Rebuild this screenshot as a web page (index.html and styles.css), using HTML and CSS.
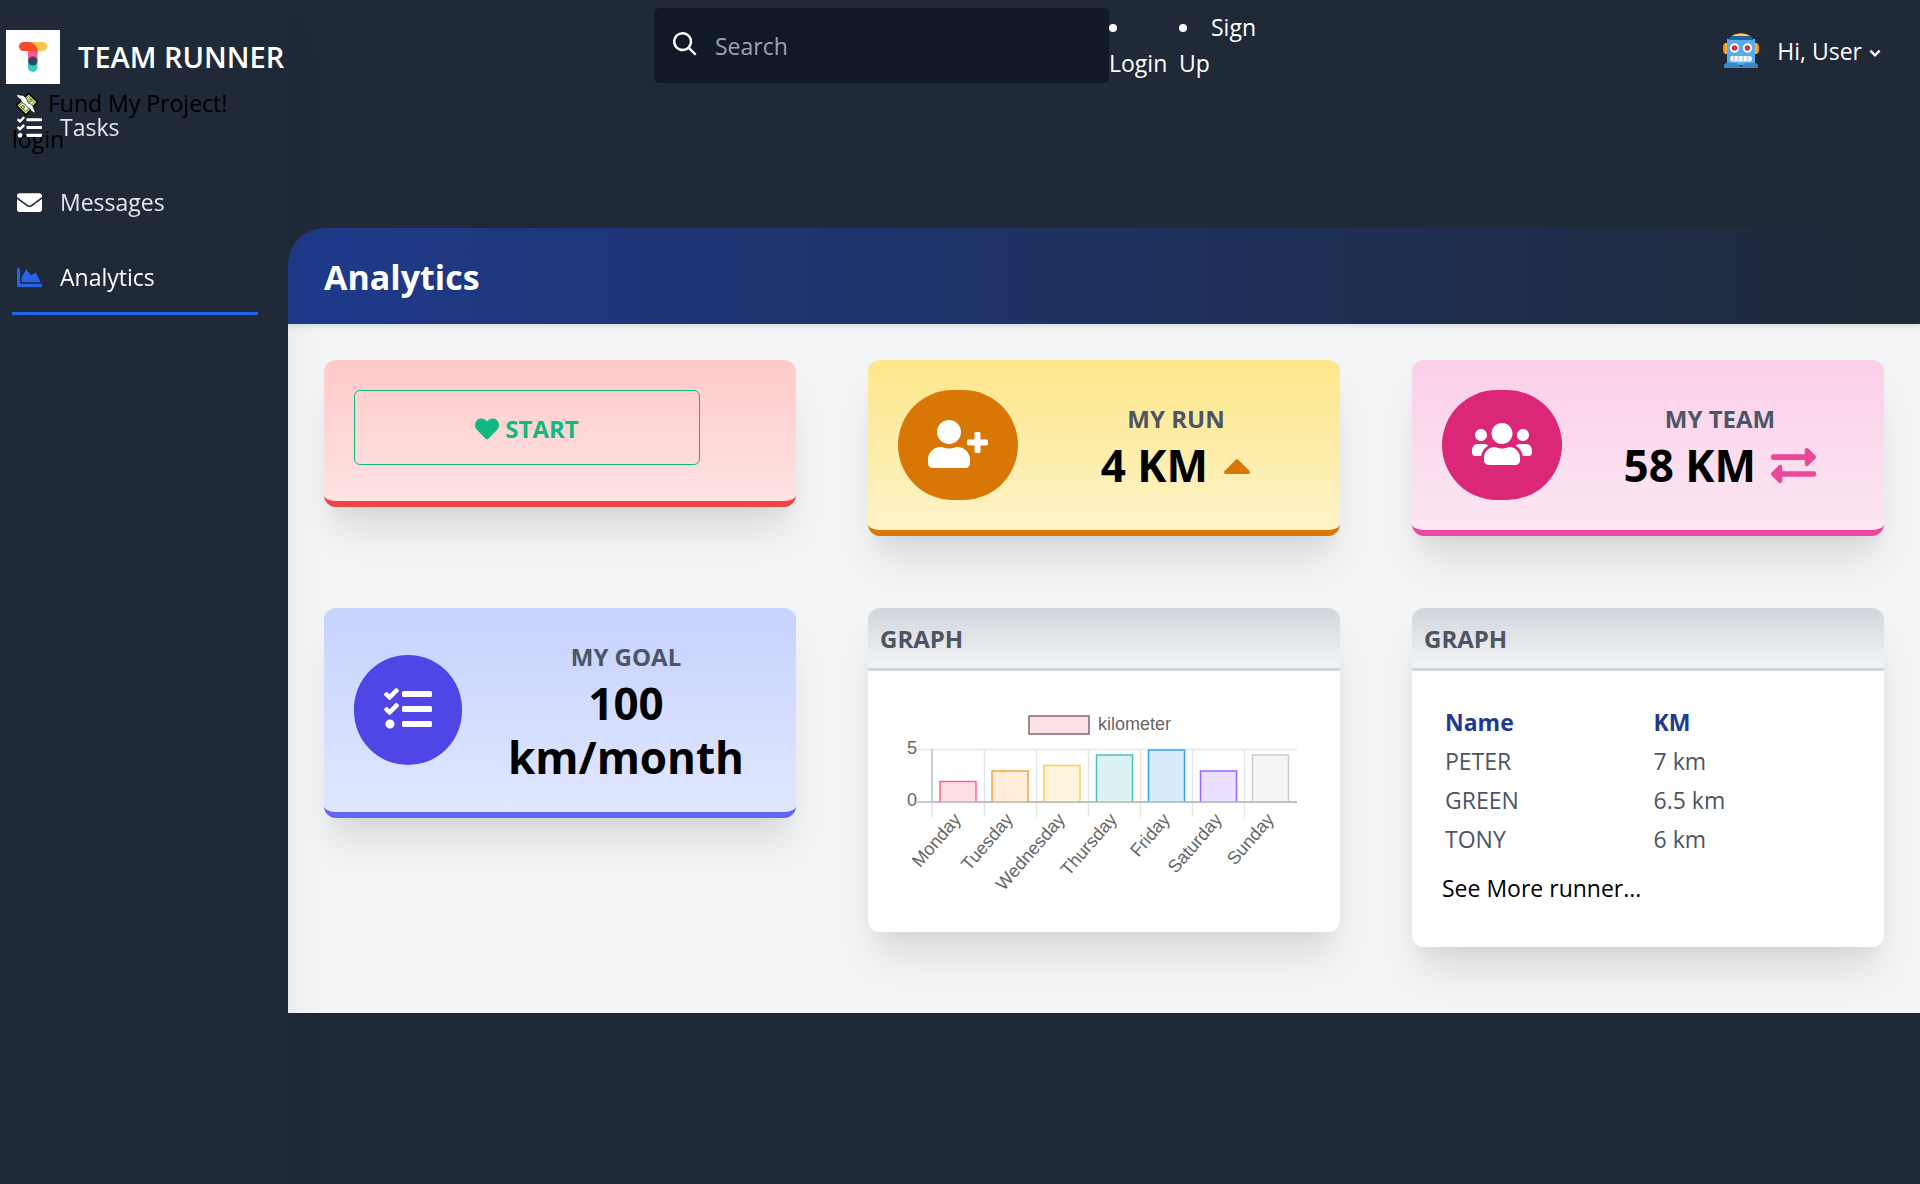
FILE: index.html
```html
<!DOCTYPE html>
<html lang="en">
<head>
<meta charset="utf-8">
<meta name="viewport" content="width=device-width, initial-scale=1">
<title>Team Runner</title>
<link rel="stylesheet" href="styles.css">
</head>
<body>
<svg class="sprite" aria-hidden="true">
  <symbol id="tasks" viewBox="0 0 512 512"><path d="M139.61 35.5a12 12 0 0 0-17 0L58.93 98.81l-22.7-22.12a12 12 0 0 0-17 0L3.53 92.41a12 12 0 0 0 0 17l47.59 47.4a12.78 12.78 0 0 0 17.61 0l15.59-15.62L156.52 69a12.09 12.09 0 0 0 .09-17zm0 159.19a12 12 0 0 0-17 0l-63.68 63.72-22.7-22.1a12 12 0 0 0-17 0L3.53 252a12 12 0 0 0 0 17L51 316.5a12.77 12.77 0 0 0 17.6 0l15.7-15.69 72.2-72.22a12 12 0 0 0 .09-16.9zM64 368c-26.49 0-48.59 21.5-48.59 48S37.53 464 64 464a48 48 0 0 0 0-96zm432 16H208a16 16 0 0 0-16 16v32a16 16 0 0 0 16 16h288a16 16 0 0 0 16-16v-32a16 16 0 0 0-16-16zm0-320H208a16 16 0 0 0-16 16v32a16 16 0 0 0 16 16h288a16 16 0 0 0 16-16V80a16 16 0 0 0-16-16zm0 160H208a16 16 0 0 0-16 16v32a16 16 0 0 0 16 16h288a16 16 0 0 0 16-16v-32a16 16 0 0 0-16-16z"/></symbol>
</svg>

<header class="topbar">
  <div class="brand">
    <a class="brand-link" href="#">
      <svg class="logo" viewBox="0 0 54 54" aria-hidden="true">
        <rect width="54" height="54" fill="#fff"/>
        <rect x="20" y="12" width="21" height="9" rx="4.5" fill="#ffc24a"/>
        <path d="M22 18h9.500v14H22z" fill="#f8588f"/>
        <path d="M17.500 12h4.500c5.500 0 9.500 4 9.500 9v3c-1-2-3-3-5.500-3h-8.500a4.500 4.500 0 0 1 0-9z" fill="#fb4b2c"/>
        <path d="M22 31h9.500v6.200a4.700 4.700 0 0 1-9.500 0z" fill="#2dd0bd"/>
        <circle cx="26.800" cy="31" r="4.600" fill="#2e4763"/>
      </svg>
      <span>TEAM RUNNER</span>
    </a>
    <div class="extra">
      <a href="#"><svg class="money" viewBox="0 0 24 24" aria-hidden="true">
        <path d="M1.500 13.500 13.500 1.500l9 8.500-11.500 13z" fill="#c9f05c" stroke="#000" stroke-width="1.600" stroke-linejoin="round"/>
        <path d="M4.500 13.500 13.500 4.500l6 5.500-8.500 9.500z" fill="#e4f2b4" stroke="#6c7f3f"/>
        <circle cx="15" cy="8.500" r="1.500" fill="#c9f05c" stroke="#444" stroke-width=".8"/>
        <circle cx="8" cy="15" r="1.500" fill="#c9f05c" stroke="#444" stroke-width=".8"/>
        <path d="M1.500 2.500 8 3.500c2.500 1 4.500 4.500 5 7.500 3 .5 5 2.500 5.500 5l2 5c-3-.5-4.500-2-5.500-4.500-2-.5-4-2-4.500-4C7.500 11.500 6 9.500 5.500 7 3.500 6.500 2 5 1.500 2.500z" fill="#fff" stroke="#000" stroke-width=".6"/>
      </svg> Fund My Project!</a>
      <a href="#">login</a>
    </div>
  </div>

  <div class="middle">
    <label class="search">
      <svg viewBox="0 0 24 24" aria-label="Search"><path d="M12.900 14.320a8 8 0 1 1 1.410-1.410l5.350 5.330-1.420 1.420-5.330-5.340zM8 14A6 6 0 1 0 8 2a6 6 0 0 0 0 12z" transform="scale(1.200)"/></svg>
      <input type="search" placeholder="Search">
    </label>
    <ul class="account">
      <li class="login"><a href="#">Login</a></li>
      <li class="signup"><a href="#">Sign Up</a></li>
    </ul>
  </div>

  <div class="user">
    <button type="button" class="user-button">
      <svg class="robot" viewBox="0 0 36 36" aria-hidden="true">
        <ellipse cx="18" cy="5" rx="10" ry="4.500" fill="#f4900c"/>
        <path d="M9 3c5-3.500 13-3.500 18 0z" fill="#ffcc4d"/>
        <rect x="0" y="10" width="7" height="11" rx="4" fill="#f4900c"/>
        <rect x="29" y="10" width="7" height="11" rx="4" fill="#f4900c"/>
        <rect x="2" y="10" width="3" height="11" fill="#ffac33"/>
        <rect x="31" y="10" width="3" height="11" fill="#ffac33"/>
        <path d="M4 6h28v26H4z" fill="#55acee"/>
        <path d="M6 7c0-3 2-4 4-4h16c2 0 4 1 4 4z" fill="#226699"/>
        <path d="M1 33c0-2 1-3 3-3h10l4 4 4-4h10c2 0 3 1 3 3v2H1z" fill="#3b88c3"/>
        <circle cx="11.500" cy="15" r="4.700" fill="#fff"/><circle cx="24.500" cy="15" r="4.700" fill="#fff"/>
        <circle cx="11.500" cy="15" r="2.800" fill="#dd2e44"/><circle cx="24.500" cy="15" r="2.800" fill="#dd2e44"/>
        <rect x="7" y="23" width="22" height="5.500" rx="2.700" fill="#fff"/>
        <path d="M10 23h2v5.500h-2zm4.500 0h2v5.500h-2zm4.500 0h2v5.500h-2zm4.500 0h2v5.500h-2z" fill="#ccd6dd"/>
      </svg>
      <span>Hi, User</span>
      <svg class="chevron" viewBox="0 0 12 12" aria-hidden="true"><path d="M2 4l4 4 4-4" fill="none" stroke="#fff" stroke-width="2"/></svg>
    </button>
  </div>
</header>

<nav class="sidebar" aria-label="Main">
  <ul>
    <li><a href="#"><svg aria-hidden="true"><use href="#tasks"/></svg><span>Tasks</span></a></li>
    <li><a href="#"><svg viewBox="0 0 512 512" aria-hidden="true"><path d="M502.3 190.8c3.9-3.1 9.7-.2 9.7 4.700V400c0 26.500-21.500 48-48 48H48c-26.500 0-48-21.500-48-48V195.600c0-5 5.700-7.800 9.700-4.700 22.400 17.400 52.100 39.500 154.100 113.600 21.100 15.400 56.700 47.800 92.200 47.600 35.700.3 72-32.800 92.300-47.600 102-74.100 131.600-96.300 154-113.700zM256 320c23.200.4 56.600-29.200 73.400-41.400 132.700-96.300 142.800-104.700 173.400-128.700 5.800-4.500 9.200-11.500 9.200-18.900v-19c0-26.500-21.500-48-48-48H48c-26.500 0-48 21.500-48 48v19c0 7.400 3.400 14.300 9.200 18.900 30.600 23.900 40.700 32.400 173.400 128.700 16.800 12.200 50.200 41.800 73.400 41.400z"/></svg><span>Messages</span></a></li>
    <li><a class="active" href="#" aria-current="page"><svg viewBox="0 0 512 512" aria-hidden="true"><path d="M500 384c6.600 0 12 5.400 12 12v40c0 6.600-5.400 12-12 12H12c-6.600 0-12-5.400-12-12V76c0-6.600 5.400-12 12-12h40c6.600 0 12 5.400 12 12v308h436zM372.700 159.500L288 216l-85.300-113.700c-5.100-6.800-15.500-6.300-19.900 1L96 248v104h384l-89.900-187.800c-3.200-6.500-11.400-8.700-17.400-4.700z"/></svg><span>Analytics</span></a></li>
  </ul>
</nav>

<main class="content">
  <div class="title"><h1>Analytics</h1></div>
  <div class="cards">
    <section class="card red">
      <button type="button" class="start"><svg viewBox="0 0 512 512" aria-hidden="true"><path d="M462.300 62.600C407.500 15.900 326 24.300 275.700 76.200L256 96.500l-19.700-20.300C186.100 24.300 104.500 15.900 49.700 62.600c-62.800 53.600-66.100 149.800-9.900 207.900l193.500 199.800c12.500 12.900 32.800 12.900 45.300 0l193.500-199.800c56.300-58.100 53-154.300-9.800-207.900z"/></svg><span>START</span></button>
    </section>

    <section class="card metric yellow">
      <div class="badge"><svg class="wide" viewBox="0 0 640 512" aria-hidden="true"><path d="M624 208h-64v-64c0-8.800-7.200-16-16-16h-32c-8.800 0-16 7.200-16 16v64h-64c-8.800 0-16 7.200-16 16v32c0 8.800 7.200 16 16 16h64v64c0 8.800 7.200 16 16 16h32c8.800 0 16-7.200 16-16v-64h64c8.800 0 16-7.200 16-16v-32c0-8.800-7.200-16-16-16zm-400 48c70.700 0 128-57.300 128-128S294.700 0 224 0 96 57.300 96 128s57.300 128 128 128zm89.600 32h-16.700c-22.200 10.200-46.900 16-72.900 16s-50.600-5.800-72.900-16h-16.700C60.200 288 0 348.200 0 422.400V464c0 26.500 21.500 48 48 48h352c26.500 0 48-21.500 48-48v-41.600c0-74.200-60.200-134.400-134.400-134.400z"/></svg></div>
      <div class="figures">
        <h2>MY RUN</h2>
        <p>4 KM <svg class="caret" viewBox="0 0 320 512" aria-hidden="true"><path d="M288.662 352H31.338c-17.818 0-26.741-21.543-14.142-34.142l128.662-128.662c7.810-7.810 20.474-7.810 28.284 0l128.662 128.662c12.600 12.599 3.676 34.142-14.142 34.142z"/></svg></p>
      </div>
    </section>

    <section class="card metric pink">
      <div class="badge"><svg class="wide" viewBox="0 0 640 512" aria-hidden="true"><path d="M96 224c35.300 0 64-28.700 64-64s-28.700-64-64-64-64 28.700-64 64 28.700 64 64 64zm448 0c35.300 0 64-28.700 64-64s-28.700-64-64-64-64 28.700-64 64 28.700 64 64 64zm32 32h-64c-17.600 0-33.500 7.100-45.100 18.600 40.300 22.100 68.900 62 75.100 109.400h66c17.700 0 32-14.300 32-32v-32c0-35.300-28.700-64-64-64zm-256 0c61.900 0 112-50.100 112-112S381.900 32 320 32 208 82.100 208 144s50.100 112 112 112zm76.800 32h-8.300c-20.800 10-43.900 16-68.500 16s-47.600-6-68.500-16h-8.300C179.600 288 128 339.600 128 403.200V432c0 26.500 21.500 48 48 48h288c26.500 0 48-21.500 48-48v-28.800c0-63.600-51.600-115.200-115.200-115.200zm-223.700-13.400C161.500 263.100 145.600 256 128 256H64c-35.300 0-64 28.700-64 64v32c0 17.700 14.300 32 32 32h65.900c6.300-47.400 34.900-87.300 75.200-109.400z"/></svg></div>
      <div class="figures">
        <h2>MY TEAM</h2>
        <p>58 KM <svg class="exchange" viewBox="0 0 512 512" aria-hidden="true"><path d="M0 168v-16c0-13.255 10.745-24 24-24h360V80c0-21.367 25.899-32.042 40.971-16.971l80 80c9.372 9.373 9.372 24.569 0 33.941l-80 80C409.956 271.982 384 261.456 384 240v-48H24c-13.255 0-24-10.745-24-24zm488 152H128v-48c0-21.314-25.862-32.080-40.971-16.971l-80 80c-9.372 9.373-9.372 24.569 0 33.941l80 80C102.057 463.997 128 453.437 128 432v-48h360c13.255 0 24-10.745 24-24v-16c0-13.255-10.745-24-24-24z"/></svg></p>
      </div>
    </section>

    <section class="card metric indigo">
      <div class="badge"><svg aria-hidden="true"><use href="#tasks"/></svg></div>
      <div class="figures">
        <h2>MY GOAL</h2>
        <p>100 km/month</p>
      </div>
    </section>

    <section class="panel">
      <h2>GRAPH</h2>
      <div class="panel-body">
        <svg class="chart" viewBox="0 0 412 201" role="img" aria-label="Kilometers per day">
          <g class="grid">
            <path d="M19 48.500H399M86.500 48V116M138.500 48V116M190.500 48V116M242.500 48V116M294.500 48V116M346.500 48V116M34 101V116"/>
            <path class="axis" d="M34 48V101M19 101H399"/>
          </g>
          <g stroke-width="1.500">
            <path d="M42 101V80.500H78V101" fill="#ffe0e6" stroke="#ff6384"/>
            <path d="M94 101V70H130V101" fill="#ffecd9" stroke="#ff9f40"/>
            <path d="M146 101V64.500H182V101" fill="#fff5dd" stroke="#ffcd56"/>
            <path d="M198.500 101V54H234.500V101" fill="#dbf2f2" stroke="#4bc0c0"/>
            <path d="M250.500 101V49H286.500V101" fill="#d7ecfb" stroke="#36a2eb"/>
            <path d="M302.500 101V70H338.500V101" fill="#ebe0ff" stroke="#9966ff"/>
            <path d="M354.500 101V54H390.500V101" fill="#f4f5f5" stroke="#c9cbcf"/>
          </g>
          <path class="axis" d="M34 101H399"/>
          <rect x="131" y="15" width="60" height="18" fill="#ffe0e6" stroke="#80686e" stroke-width="1.500"/>
          <text x="200" y="29">kilometer</text>
          <g text-anchor="end">
            <text x="19" y="53">5</text>
            <text x="19" y="105">0</text>
            <text transform="translate(64 119) rotate(-49)">Monday</text>
            <text transform="translate(116 119) rotate(-49)">Tuesday</text>
            <text transform="translate(168 119) rotate(-49)">Wednesday</text>
            <text transform="translate(220 119) rotate(-49)">Thursday</text>
            <text transform="translate(273 119) rotate(-49)">Friday</text>
            <text transform="translate(325 119) rotate(-49)">Saturday</text>
            <text transform="translate(377 119) rotate(-49)">Sunday</text>
          </g>
        </svg>
      </div>
    </section>

    <section class="panel">
      <h2>GRAPH</h2>
      <div class="panel-body">
        <table>
          <thead><tr><th scope="col">Name</th><th scope="col">KM</th></tr></thead>
          <tbody>
            <tr><td>PETER</td><td>7 km</td></tr>
            <tr><td>GREEN</td><td>6.5 km</td></tr>
            <tr><td>TONY</td><td>6 km</td></tr>
          </tbody>
        </table>
        <a class="more" href="#">See More runner...</a>
      </div>
    </section>
  </div>
</main>
</body>
</html>
```
FILE: styles.css
```css
* { box-sizing: border-box; }

body {
  margin: 0;
  min-height: 100vh;
  background: #1f2937;
  color: #000;
  font: 23px/36px "Open Sans", "Noto Sans", sans-serif;
}

a { color: inherit; text-decoration: none; }
h1, h2, p, ul { margin: 0; padding: 0; }
button, input { font: inherit; }
svg { fill: currentColor; flex: none; }
.sprite { display: none; }

/* Top bar */
.topbar {
  display: grid;
  grid-template-columns: repeat(3, minmax(0, 1fr));
  min-height: 228px;
}
.brand { padding: 30px 6px 0; }
.brand-link {
  display: flex;
  align-items: center;
  gap: 18px;
  color: #fff;
  font-size: 29px;
  font-weight: 600;
}
.logo { width: 54px; height: 54px; }
.extra { display: grid; justify-items: start; padding: 1px 6px; }
.money { width: 24px; height: 24px; margin: 0 3px; vertical-align: -4px; }

.middle { display: flex; align-items: flex-start; padding: 8px 8px 0 14px; }
.search {
  display: flex;
  flex: 1;
  align-items: center;
  gap: 18px;
  min-width: 0;
  height: 75px;
  padding: 0 19px;
  border-radius: 6px;
  background: #111827;
  color: #fff;
}
.search svg { width: 24px; height: 24px; margin-bottom: 4px; }
.search input {
  flex: 1;
  min-width: 0;
  padding: 0;
  border: 0;
  outline: 0;
  background: none;
  color: #fff;
}
.search input::placeholder { color: #9ca3af; }
.account { display: flex; padding-top: 1px; color: #fff; list-style: disc inside; }
.login { width: 70px; }
.signup { width: 93px; }

.user { display: flex; justify-content: flex-end; align-items: flex-start; padding: 33px 36px 0 0; }
.user-button {
  display: flex;
  align-items: center;
  gap: 18px;
  padding: 0;
  border: 0;
  background: none;
  color: #fff;
}
.robot { width: 36px; height: 36px; }
.chevron { width: 14px; height: 14px; margin: 4px 2px 0 -12px; }

/* Side navigation, floating over the page */
.sidebar {
  position: fixed;
  top: 0;
  bottom: 0;
  left: 0;
  width: 288px;
  padding: 90px 30px 0 12px;
  box-shadow: 0 30px 38px -8px rgba(0, 0, 0, .1), 0 15px 15px -8px rgba(0, 0, 0, .04);
  color: #e5e7eb;
  pointer-events: none;
}
.sidebar ul { list-style: none; pointer-events: auto; }
.sidebar a {
  display: flex;
  align-items: center;
  gap: 18px;
  padding: 19px 5px 17px;
  border-bottom: 3px solid transparent;
}
.sidebar svg { width: 25px; height: 25px; color: #fff; }
.sidebar .active { border-color: #2563eb; color: #fff; }
.sidebar .active svg { color: #2563eb; }

/* Page content */
.content {
  margin-left: 288px;
  padding-bottom: 30px;
  overflow: hidden;
  border-top-left-radius: 36px;
  background: linear-gradient(#1f2937 48px, #f3f4f6 48px);
}
.title {
  padding: 25px 36px 23px;
  border-top-left-radius: 36px;
  background: linear-gradient(to right, #1e3a8a, #1f2937);
  box-shadow: 0 2px 5px rgba(0, 0, 0, .12);
  color: #fff;
}
h1 { font-size: 34px; line-height: 48px; font-weight: 700; }
.cards {
  display: grid;
  grid-template-columns: repeat(3, minmax(0, 1fr));
  align-items: start;
  gap: 72px;
  padding: 36px;
}

.card, .panel {
  border-radius: 12px;
  box-shadow: 0 30px 38px -8px rgba(0, 0, 0, .1), 0 15px 15px -8px rgba(0, 0, 0, .04);
}
.card { padding: 30px; border-bottom: 6px solid; }
.red { padding-bottom: 36px; border-color: #ef4444; background: linear-gradient(to bottom, #fecaca, #fee2e2); }
.yellow { border-color: #d97706; background: linear-gradient(to bottom, #fde68a, #fef3c7); }
.pink { border-color: #ec4899; background: linear-gradient(to bottom, #fbcfe8, #fce7f3); }
.indigo { border-color: #6366f1; background: linear-gradient(to bottom, #c7d2fe, #e0e7ff); }

.start {
  display: flex;
  align-items: center;
  justify-content: center;
  gap: 6px;
  width: 84%;
  height: 75px;
  padding: 2px 0 0;
  border: 1px solid #10b981;
  border-radius: 6px;
  background: none;
  color: #10b981;
  font-size: 24px;
  font-weight: 700;
}
.start svg { width: 24px; height: 24px; }

.metric { display: flex; align-items: center; gap: 24px; }
.badge { display: flex; padding: 30px 30px 32px; border-radius: 999px; color: #fff; }
.badge svg { width: 48px; height: 48px; }
.badge .wide { width: 60px; }
.yellow .badge { background: #d97706; }
.pink .badge { background: #db2777; }
.indigo .badge { background: #4f46e5; }
.figures { flex: 1; min-width: 0; text-align: center; }
h2 { color: #4b5563; font-size: 24px; line-height: 38px; font-weight: 700; }
.figures p { margin-bottom: -2px; font-size: 44px; line-height: 54px; font-weight: 700; }
.figures svg { height: 45px; margin-left: 4px; vertical-align: -6px; }
.caret { width: 28px; color: #d97706; }
.exchange { width: 45px; color: #ec4899; }

.panel { background: #fff; }
.panel h2 {
  padding: 12px 12px 10px;
  border-bottom: 3px solid #d1d5db;
  border-radius: 12px 12px 0 0;
  background: linear-gradient(to bottom, #d1d5db, #f3f4f6);
}
.panel-body { padding: 30px; }
.chart { display: block; width: 100%; overflow: visible; }
.chart text { fill: #666; font: 18px "Liberation Sans", Arial, sans-serif; }
.chart .grid { fill: none; stroke: #e5e5e5; stroke-width: 1.5; }
.chart .axis { fill: none; stroke: #bbb; stroke-width: 1.5; }

table { width: 100%; border-spacing: 3px; }
th, td { padding: 0; text-align: left; }
th { color: #1e3a8a; font-weight: 700; }
th:first-child { width: 51%; }
td { color: #4b5563; }
.more { display: block; padding: 10px 0 11px; }
```
